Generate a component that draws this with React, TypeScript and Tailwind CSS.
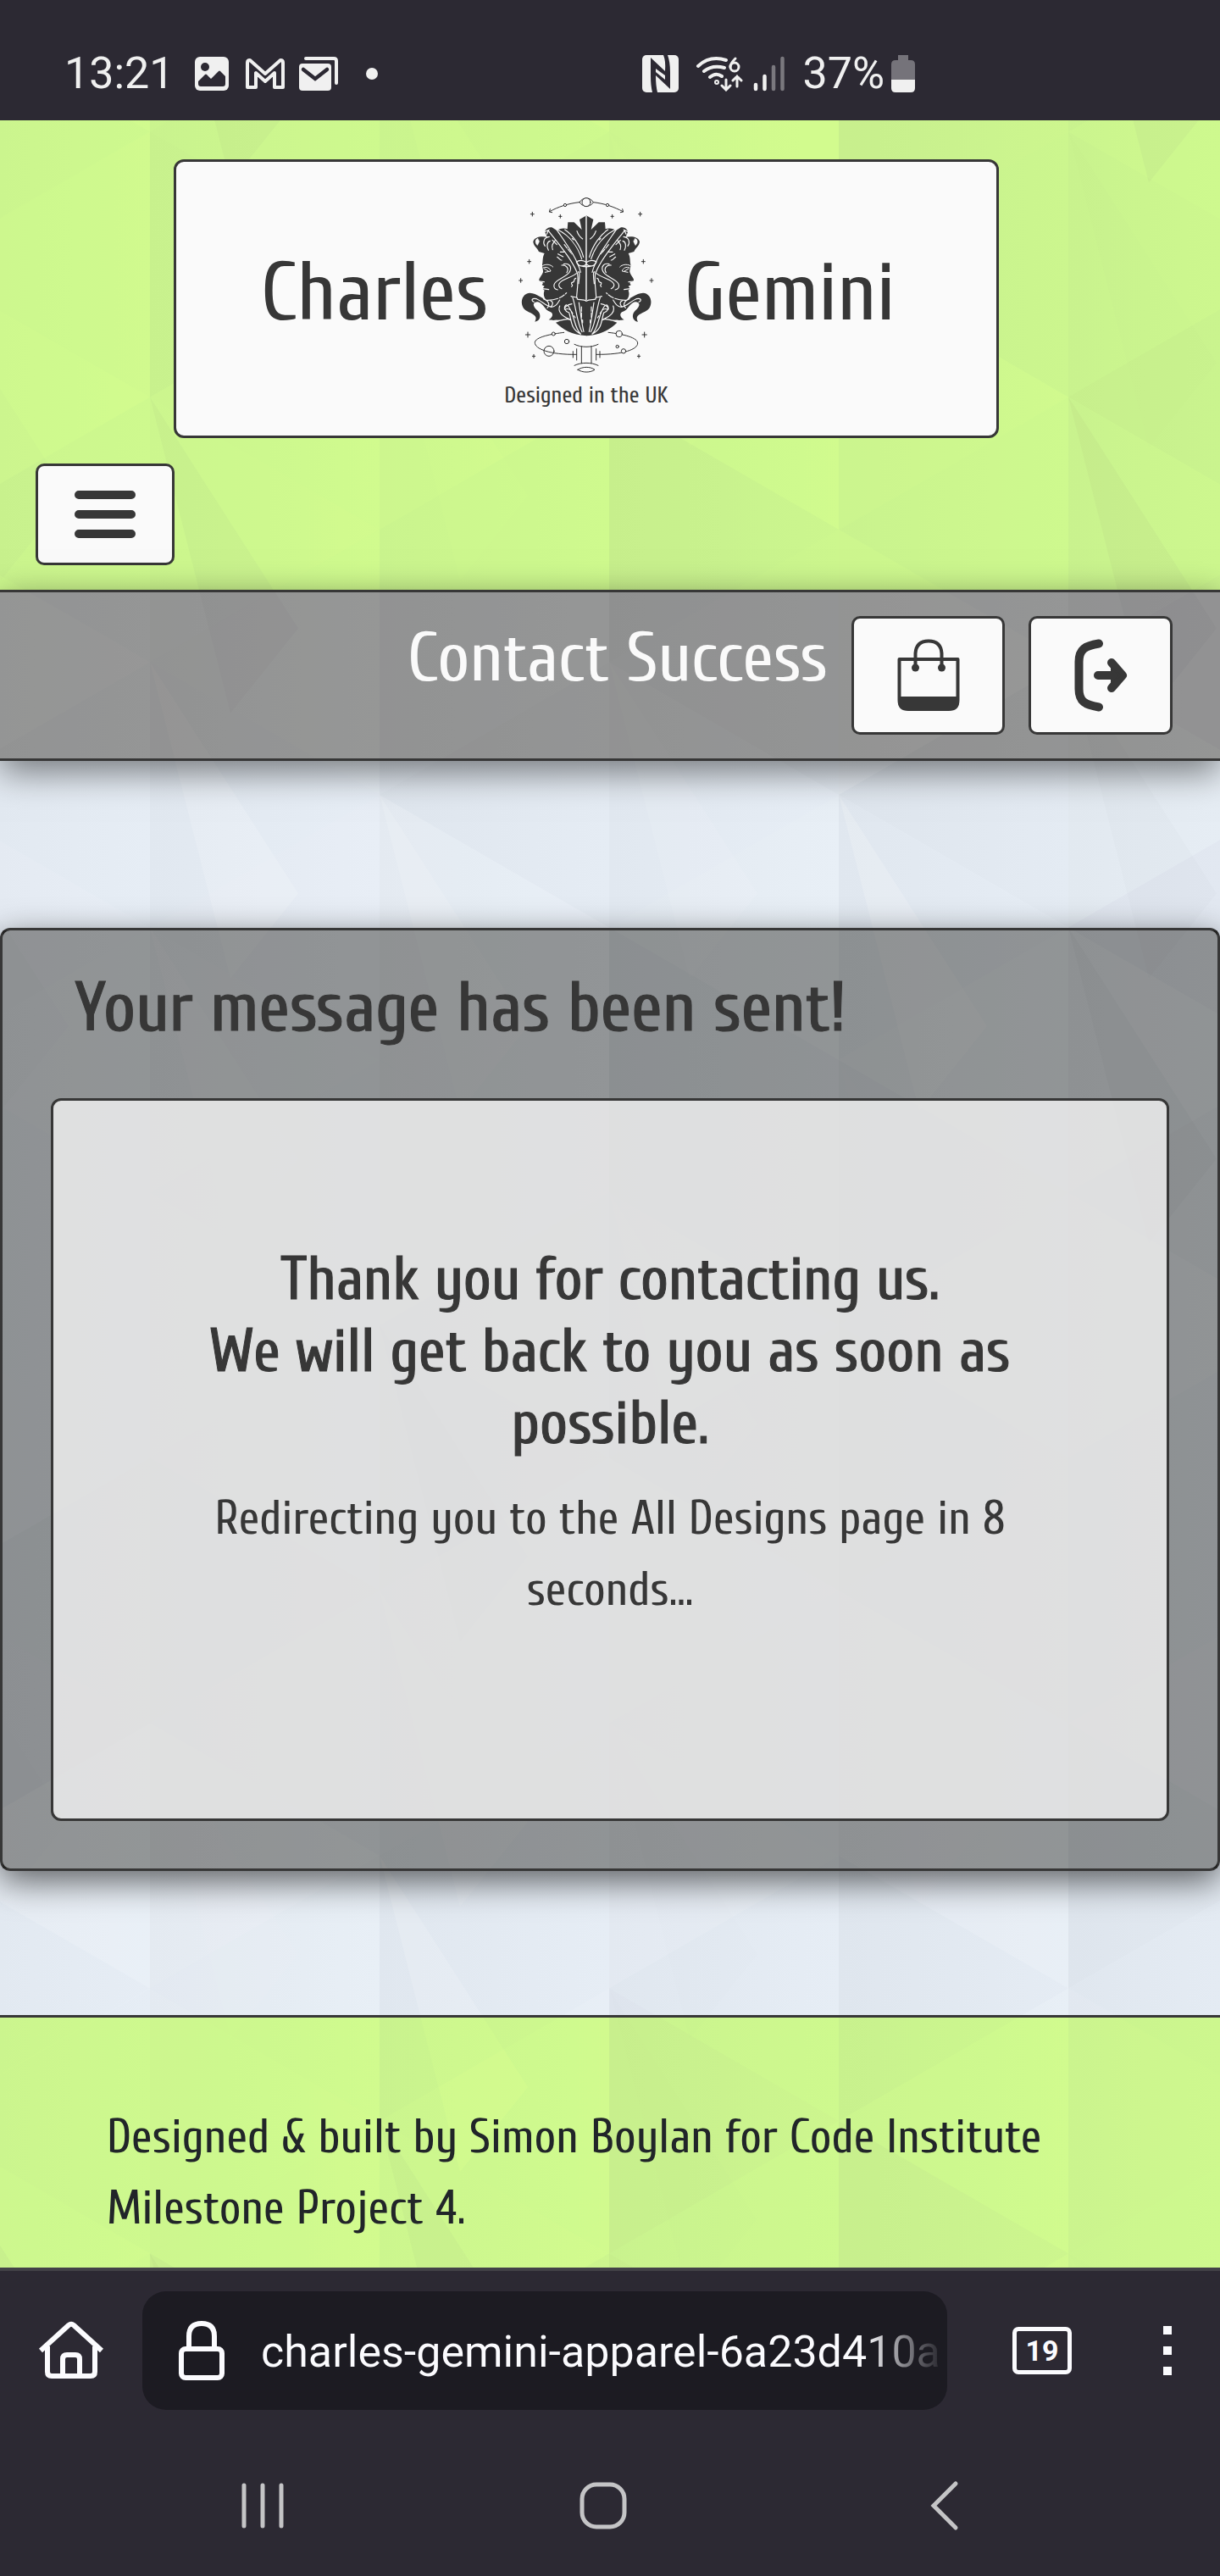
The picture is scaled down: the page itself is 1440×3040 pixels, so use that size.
import type { ReactNode } from "react";

const heading = "font-['Cuprum','Liberation_Sans_Narrow','Arial_Narrow',sans-serif]";

/* ---------- Low-poly backdrop ---------- */

const COL = 271;
const ROW = 313;
const shade = (n: number) => {
  const v = Math.sin(n * 12.9898) * 43758.5453;
  return v - Math.floor(v);
};

type Facet = { points: string; dark: boolean; alpha: number };

const facets: Facet[] = [];
const columns = [-94, 177, 448, 719, 990, 1261];
columns.forEach((x, c) => {
  const shift = c % 2 === 0 ? 0 : ROW / 2;
  for (let r = -1; r < 9; r++) {
    const y = 170 + r * ROW - shift;
    const seed = c * 31 + r * 7 + 3;
    const half = ROW / 2;
    const right = x + COL;
    const add = (points: string, k: number, strength: number) =>
      facets.push({ points, dark: shade(seed + k) > 0.5, alpha: strength * shade(seed + k + 50) });
    add(`${x},${y} ${right},${y - half} ${right},${y + half}`, 1, 0.025);
    add(`${x},${y} ${x},${y + ROW} ${right},${y + half}`, 2, 0.025);
    if (shade(seed + 90) > 0.5) {
      add(`${x},${y} ${x + 95},${y + ROW + 60} ${x + 175},${y + ROW - 40}`, 3, 0.035);
    }
  }
});

function Backdrop() {
  return (
    <svg
      aria-hidden="true"
      className="absolute inset-0 h-full w-full"
      viewBox="0 0 1440 2534"
      preserveAspectRatio="xMidYMin slice"
    >
      <defs>
        <linearGradient id="strip" x1="0" x2="1" y1="0" y2="0">
          <stop offset="0" stopColor="#e1e8f0" />
          <stop offset="0.5" stopColor="#e4ebf3" />
          <stop offset="1" stopColor="#e7eef6" />
        </linearGradient>
      </defs>
      {columns.map((x) => (
        <rect key={x} x={x} y="0" width={COL + 1} height="2534" fill="url(#strip)" />
      ))}
      {facets.map((f, i) => (
        <polygon key={i} points={f.points} fill={f.dark ? "#554455" : "#ffffff"} opacity={f.dark ? f.alpha : f.alpha * 5} />
      ))}
    </svg>
  );
}

/* Brightens the backdrop, then tints it lime. */
function LimeTint() {
  return (
    <>
      <div className="absolute inset-0 bg-[#101010] mix-blend-color-dodge" />
      <div className="absolute inset-0 bg-[#d7fb8e] mix-blend-multiply" />
    </>
  );
}

/* ---------- Logo ---------- */

function Star({ x, y, r = 8 }: { x: number; y: number; r?: number }) {
  return <path d={`M${x - r} ${y}H${x + r}M${x} ${y - r - 1}V${y + r + 1}`} strokeWidth="3" />;
}

function FaceHalf() {
  return (
    <>
      <path
        stroke="none"
        fill="#373737"
        d="M337 130L312 144L320 180L293 154H271L269 178C256 172 240 177 232 183L214 172C202 169 189 180 190 189L198 207C180 202 152 204 148 223C149 238 162 244 168 258L188 264C180 278 183 292 180 304C180 316 184 322 183 330C179 343 168 352 169 359C172 366 181 363 183 369L179 376L188 380L181 389L188 395C182 408 188 426 196 429C177 423 163 406 136 404C107 406 99 442 118 463C137 478 169 481 154 506C174 503 178 481 164 467C144 451 145 435 165 436C186 442 188 465 207 470C219 474 221 488 203 499C222 503 229 498 244 503L228 509C255 535 282 551 337 556Z"
      />
      <g stroke="#fafafa" strokeWidth="3.5" fill="none">
        <path d="M202 184C239 232 285 285 305 336C309 365 303 395 302 418" />
        <path d="M230 178C266 232 303 280 316 331" />
        <path d="M236 181C276 201 306 240 320 284" />
        <path d="M260 180C286 197 315 235 326 277" />
        <path d="M303 185C308 201 316 208 323 213" />
        <path d="M337 132V428" strokeWidth="4" />
        <path d="M337 296C325 287 310 287 301 294C307 311 327 314 337 301M337 312C331 309 325 314 321 308" />
        <path d="M188 188L203 181L196 196M205 205C185 207 181 226 190 238M208 220C196 223 195 240 202 253M226 218C216 231 212 236 217 251" />
        <path d="M164 211C153 215 154 229 163 236L170 222Z" fill="#fafafa" strokeWidth="1" />
        <path d="M216 217L232 233M244 259H258M236 266L254 276M233 277C242 283 244 289 249 288" />
        <path d="M182 307C194 301 210 303 218 312M184 315C195 309 208 317 210 327L190 331M187 318L202 327" strokeWidth="3" />
        <path d="M171 363L187 365M181 389L203 392" />
        <path d="M256 302C274 297 286 311 278 328C269 348 224 357 222 375C220 385 224 391 235 393" />
        <path d="M249 306C266 304 276 318 267 332M301 335C284 350 260 351 243 367C235 375 239 385 249 389" />
        <path d="M299 352C287 355 301 365 284 368C281 377 292 374 284 382" />
        <path d="M196 430C231 431 253 417 266 404" strokeDasharray="40 6 20 5" />
        <path d="M151 436C139 431 143 421 160 425C184 435 195 456 218 453C231 451 236 438 242 429" />
        <path d="M184 425C204 432 208 448 198 457M209 431C223 437 215 448 211 454M242 450C233 472 253 488 276 497" />
        <path d="M265 446C253 455 261 470 275 474C285 503 279 530 316 550M270 448C293 470 292 529 316 549M262 462C273 457 283 466 288 477" />
        <path d="M282 416C293 420 307 417 304 426C310 430 326 425 337 433M288 421C299 451 304 515 321 542M285 443C269 446 260 452 259 462M310 438C315 474 322 522 327 541" />
        <path d="M281 500C266 490 258 504 227 502M307 330C316 324 309 366 309 371" />
        <path d="M319 453V490M323 500V510M292 485L297 492M286 211L291 216M258 233L285 266" strokeDasharray="16 5" />
      </g>
    </>
  );
}

function GeminiMark() {
  return (
    <svg
      viewBox="97 60 478 630"
      className="h-[210px] w-[160px]"
      role="img"
      aria-label="Gemini twins"
      fill="none"
      stroke="#303030"
      strokeWidth="3"
      strokeLinecap="round"
    >
      <path d="M206 116C237 99 270 88 311 83M361 83C402 88 433 99 466 116" />
      <path d="M208 107L205 117L215 119M464 107L467 117L457 119" />
      <path d="M312 83C323 64 350 64 361 83C350 102 323 102 312 83Z" fill="#fafafa" />
      <circle cx="336" cy="83" r="15" fill="#fafafa" />
      <circle cx="261" cy="93" r="5" fill="#fafafa" />
      <circle cx="411" cy="93" r="5" fill="#fafafa" />
      <FaceHalf />
      <g transform="translate(673 0) scale(-1 1)">
        <FaceHalf />
      </g>
      <Star x={145} y={125} r={6} />
      <Star x={244} y={133} r={5} />
      <Star x={428} y={133} r={5} />
      <Star x={527} y={125} r={6} />
      <Star x={134} y={293} r={6} />
      <Star x={538} y={293} r={6} />
      <Star x={104} y={360} r={6} />
      <Star x={567} y={360} r={6} />
      <Star x={129} y={552} />
      <Star x={542} y={552} />
      <Star x={150} y={628} r={5} />
      <Star x={522} y={628} r={5} />
      <path d="M257 544C215 549 154 560 154 580C154 602 205 623 301 622M414 544C470 550 518 563 518 582C518 603 470 623 371 622" />
      <circle cx="220" cy="549" r="6" fill="#fafafa" />
      <circle cx="267" cy="576" r="8" />
      <circle cx="204" cy="610" r="18" />
      <circle cx="452" cy="549" r="11" fill="#fafafa" />
      <circle cx="446" cy="594" r="5" />
      <circle cx="468" cy="610" r="8" fill="#fafafa" />
      <path d="M294 586C318 598 354 598 378 586M294 661C318 649 354 649 378 661M319 594V653M354 594V653M302 602V642M371 602V642M289 611V633M384 611V633" />
      <path d="M306 676C323 664 350 664 366 676C350 687 323 687 306 676Z" />
    </svg>
  );
}

/* ---------- Shared pieces ---------- */

function IconButton({ label, className, children }: { label: string; className: string; children: ReactNode }) {
  return (
    <button
      type="button"
      aria-label={label}
      className={`flex items-center justify-center rounded-[10px] border-[3px] border-[#373737] bg-[#fafafa] text-[#373737] ${className}`}
    >
      {children}
    </button>
  );
}

function StatusBar() {
  return (
    <div className="flex h-[142px] items-end bg-[#2c2933] px-[76px] pb-[25px] font-[Roboto,sans-serif] text-[52px] leading-[60px] text-[#f0f0f0]">
      <div className="flex flex-1 items-center">
        <span className="w-[154px]">13:21</span>
        <svg className="h-10 w-10" viewBox="0 0 40 40" aria-hidden="true">
          <rect width="40" height="40" rx="6" fill="currentColor" />
          <circle cx="12" cy="12" r="5" fill="#2c2933" />
          <path d="M4 29l8-8q1-1 2 0l5 5 9-9q1-1 2 0l6 6v9q0 3-3 3H7q-3 0-3-3z" fill="#2c2933" />
        </svg>
        <svg className="ml-5 h-9 w-[46px]" viewBox="0 0 46 36" fill="none" stroke="currentColor" strokeWidth="4" strokeLinejoin="round" aria-hidden="true">
          <path d="M2 34V5q0-3 3-3l18 16L41 2q3 0 3 3v29H34V17L23 27 12 17v17z" />
        </svg>
        <svg className="ml-4 h-[42px] w-12" viewBox="0 0 48 42" fill="none" aria-hidden="true">
          <path d="M9 3H42q3 0 3 3v26" stroke="currentColor" strokeWidth="4" strokeLinecap="round" />
          <rect x="1" y="9" width="38" height="32" rx="4" fill="currentColor" />
          <path d="M6 16l14 11 14-11" stroke="#2c2933" strokeWidth="4.5" strokeLinecap="round" />
        </svg>
        <span className="ml-8 size-[14px] rounded-full bg-[#f0f0f0]" />
      </div>
      <div className="mr-[284px] flex items-center">
        <svg className="h-11 w-[43px]" viewBox="0 0 43 44" aria-hidden="true">
          <rect width="43" height="44" rx="5" fill="currentColor" />
          <path d="M10 3l17 16Q28 7 25 0h5q3 8 3 20v20L16 24q0 12 2 20h-6q-2-8-2-19z" fill="#2c2933" />
          <path d="M16 16l11 8v5L16 20z" fill="#f0f0f0" />
        </svg>
        <svg className="ml-5 h-[42px] w-14" viewBox="0 0 56 42" fill="none" stroke="currentColor" strokeWidth="4" strokeLinecap="round" aria-hidden="true">
          <path d="M3 12Q17-1 36 5M10 18Q20 10 34 14M17 25Q24 19 31 24" />
          <circle cx="25" cy="31" r="1" />
          <path d="M47 3Q41 9 41 13" strokeWidth="3" />
          <circle cx="46" cy="13" r="5" strokeWidth="3" />
          <path d="M36 28v11M31 35l5 5 5-5M49 36V24M44 29l5-5 5 5" strokeWidth="3" />
        </svg>
        <svg className="ml-3 h-[42px] w-[38px]" viewBox="0 0 38 42" fill="none" stroke="currentColor" strokeWidth="4.5" strokeLinecap="round" aria-hidden="true">
          <path d="M3 34v5M13.5 24v15" />
          <path d="M24 13v26M34.5 3v36" opacity="0.4" />
        </svg>
        <span className="ml-5">37%</span>
        <svg className="ml-2 h-[44px] w-7" viewBox="0 0 28 44" aria-hidden="true">
          <path d="M8 0h12v6h3q5 0 5 5v18H0V11q0-5 5-5h3z" fill="#75737a" />
          <path d="M0 29h28v10q0 5-5 5H5q-5 0-5-5z" fill="currentColor" />
        </svg>
      </div>
    </div>
  );
}

function SiteHeader() {
  return (
    <header className="relative px-[42px] pt-[46px] pb-[29px]">
      <LimeTint />
      <a
        href="#home"
        className={`relative ml-[163px] mr-[219px] flex flex-col items-center rounded-[12px] border-[3px] border-[#373737] bg-[#fafafa] pt-10 pb-[31px] text-[#373737] ${heading}`}
      >
        <span className="flex items-center justify-center">
          <span className="w-[268px] pt-5 text-right text-[97px] leading-[112px]">Charles</span>
          <span className="mx-9">
            <GeminiMark />
          </span>
          <span className="w-[268px] pt-5 text-[97px] leading-[112px]">Gemini</span>
        </span>
        <span className="mt-2.5 text-[27px] leading-8">Designed in the UK</span>
      </a>
      <IconButton label="Open menu" className="relative mt-[30px] h-[120px] w-[164px]">
        <svg className="h-14 w-[72px]" viewBox="0 0 72 56" stroke="currentColor" strokeWidth="10" strokeLinecap="round" aria-hidden="true">
          <path d="M5 5H67M5 28H67M5 51H67" />
        </svg>
      </IconButton>
    </header>
  );
}

function TitleBar() {
  return (
    <div className="relative flex items-start justify-end border-y-[3px] border-[#373737] pt-7 pr-14 pb-7 shadow-[0_12px_40px_rgba(0,0,0,0.5)]">
      <div className="absolute inset-0 bg-[#a5a19c] mix-blend-multiply" />
      <h1 className={`relative mt-2 mr-7 text-[83px] leading-[84px] text-[#fafafa] ${heading}`}>Contact Success</h1>
      <IconButton label="Shopping bag" className="relative mr-7 h-[140px] w-[181px]">
        <svg className="h-[86px] w-[74px]" viewBox="0 0 74 86" fill="none" stroke="currentColor" strokeWidth="4" aria-hidden="true">
          <path d="M2.5 24H71.5V72q0 10-9 10H12q-9.5 0-9.5-10z" strokeLinejoin="round" />
          <path d="M1 68H73V74q0 11-12 11H13Q1 85 1 74z" fill="currentColor" stroke="none" />
          <path d="M21.5 34V17q1-14.5 15.5-14.5T52.5 17V34" />
          <circle cx="21.5" cy="34" r="4.5" fill="currentColor" stroke="none" />
          <circle cx="52.5" cy="34" r="4.5" fill="currentColor" stroke="none" />
        </svg>
      </IconButton>
      <IconButton label="Log out" className="relative h-[140px] w-[170px]">
        <svg className="h-[86px] w-[64px]" viewBox="0 0 64 86" fill="none" stroke="currentColor" strokeWidth="10" strokeLinecap="round" strokeLinejoin="round" aria-hidden="true">
          <path d="M30 5.5C14 8 6.5 12 6.5 27V59C6.5 74 14 78 30 80.5" />
          <path d="M29 43H56M45 28L58 43 45 58" />
          <path d="M45 34L55 43 45 52z" fill="currentColor" strokeWidth="2" />
        </svg>
      </IconButton>
    </div>
  );
}

function BrowserBar() {
  return (
    <div className="border-t-[4px] border-[#424247] bg-[#2c2933] font-[Roboto,sans-serif] text-[#fbfbfe]">
      <div className="flex items-center pt-6">
        <button type="button" aria-label="Home" className="ml-[44px] shrink-0">
          <svg className="h-[72px] w-20" viewBox="0 0 80 72" fill="none" stroke="currentColor" strokeWidth="6" strokeLinejoin="round" aria-hidden="true">
            <path d="M4 36L37 6q3-2.500 6 0L76 36" />
            <path d="M12 31V61q0 5 5 5H63q5 0 5-5V31M30 66V46q0-5 5-5H45q5 0 5 5V66" />
          </svg>
        </button>
        <div className="ml-11 flex h-[140px] min-w-0 flex-1 items-center rounded-[28px] bg-[#1c1b22] pl-[43px]">
          <svg className="h-[72px] w-[54px] shrink-0" viewBox="0 0 54 72" fill="none" stroke="currentColor" strokeWidth="6" aria-hidden="true">
            <path d="M12 34V19Q12 4 27 4T42 19V34" />
            <rect x="3" y="34" width="48" height="34" rx="5" />
          </svg>
          <span className="ml-[43px] min-w-0 flex-1 bg-linear-to-r from-[#fbfbfe] from-88% to-[#1c1b22] bg-clip-text pt-1 text-[52px] leading-[68px] whitespace-nowrap text-transparent">
            charles-gemini-apparel-6a23d410a
          </span>
        </div>
        <button
          type="button"
          aria-label="19 open tabs"
          className="ml-[77px] flex h-14 w-[70px] shrink-0 items-center justify-center rounded-[7px] border-[5px] border-[#fbfbfe] text-[34px] leading-9 font-bold"
        >
          19
        </button>
        <button type="button" aria-label="More options" className="mr-[57px] ml-[108px] flex shrink-0 flex-col gap-[14px]">
          <span className="size-[10px] bg-[#fbfbfe]" />
          <span className="size-[10px] bg-[#fbfbfe]" />
          <span className="size-[10px] bg-[#fbfbfe]" />
        </button>
      </div>
      <div className="grid h-[196px] grid-cols-[1fr_auto_1fr] items-center pt-[30px] text-[#c4c4c6]">
        <button type="button" aria-label="Recent apps" className="ml-[280px] justify-self-start">
          <svg className="h-[60px] w-[60px]" viewBox="0 0 60 60" stroke="currentColor" strokeWidth="5" strokeLinecap="round" aria-hidden="true">
            <path d="M8 6V54M30 6V54M52 6V54" />
          </svg>
        </button>
        <button type="button" aria-label="Home screen" className="mr-4">
          <svg className="h-[60px] w-[60px]" viewBox="0 0 60 60" fill="none" stroke="currentColor" strokeWidth="5" aria-hidden="true">
            <rect x="5" y="5" width="50" height="50" rx="17" />
          </svg>
        </button>
        <button type="button" aria-label="Back" className="mr-[304px] justify-self-end">
          <svg className="h-[60px] w-10" viewBox="0 0 40 60" fill="none" stroke="currentColor" strokeWidth="5" strokeLinecap="round" aria-hidden="true">
            <path d="M32 4L6 30L32 56" />
          </svg>
        </button>
      </div>
    </div>
  );
}

export default function App() {
  return (
    <div className="flex min-h-screen flex-col bg-[#2c2933]">
      <StatusBar />
      <div className="relative isolate flex-1 overflow-hidden">
        <Backdrop />
        <SiteHeader />
        <TitleBar />
        <main className="relative mt-[197px] rounded-[12px] border-[3px] border-[#373737] px-[57px] pt-[43px] pb-14 shadow-[0_12px_40px_rgba(0,0,0,0.6)]">
          <div className="absolute inset-0 bg-[#a09f9c] mix-blend-multiply" />
          <h2 className={`relative ml-7 text-[83px] leading-[98px] font-medium text-[#373737] [-webkit-text-stroke:1px] ${heading}`}>
            Your message has been sent!
          </h2>
          <section
            className={`relative mt-[57px] rounded-[12px] border-[3px] border-[#373737] bg-[#fafafa]/75 px-[168px] pt-[169px] pb-[227px] text-center text-[#373737] ${heading}`}
          >
            <h3 className="text-[72px] leading-[85px] font-medium [-webkit-text-stroke:1px]">
              Thank you for contacting us.
              <br />
              We will get back to you as soon as possible.
            </h3>
            <p className="mt-7 text-[56px] leading-[84px]">Redirecting you to the All Designs page in 8 seconds...</p>
          </section>
        </main>
        <footer className="relative mt-[170px] border-t-[3px] border-[#373737] px-[126px] pt-[100px] pb-[27px]">
          <LimeTint />
          <p className={`relative text-[56px] leading-[84px] text-[#212529] ${heading}`}>
            Designed &amp; built by Simon Boylan for Code Institute Milestone Project 4.
          </p>
        </footer>
      </div>
      <BrowserBar />
    </div>
  );
}
